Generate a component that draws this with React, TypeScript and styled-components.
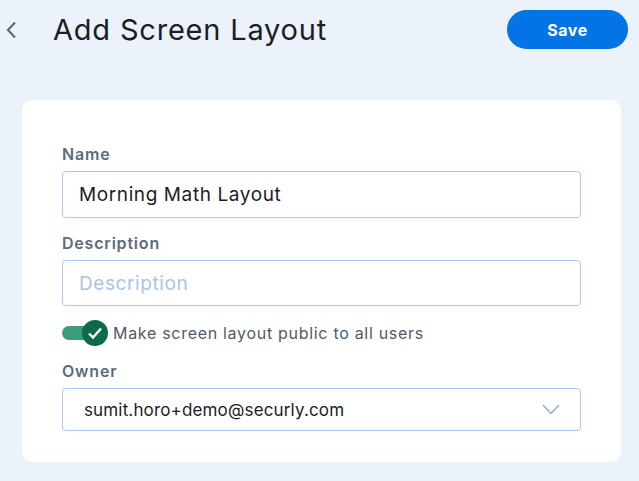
import React from "react";
import styled, { createGlobalStyle } from "styled-components";

const GlobalStyle = createGlobalStyle`
  html, body {
    margin: 0;
    padding: 0;
    background: #ecf2fa;
    font-family: Inter, "Open Sans", sans-serif;
  }
`;

const Page = styled.div`
  width: 639px;
  height: 481px;
  background: #ecf2fa;
  box-sizing: border-box;
  padding: 10px 11px 0 0;
`;

const Header = styled.header`
  display: flex;
  align-items: center;
  height: 39px;
`;

const BackButton = styled.button`
  display: flex;
  align-items: center;
  justify-content: center;
  width: 22px;
  height: 39px;
  padding: 0;
  border: 0;
  background: transparent;
  cursor: pointer;
`;

const Title = styled.h1`
  margin: 0 0 0 31px;
  flex: 1;
  font-size: 29px;
  font-weight: 400;
  color: #1c1d26;
  letter-spacing: 0.8px;
`;

const SaveButton = styled.button`
  width: 121px;
  height: 39px;
  border: 0;
  border-radius: 20px;
  background: #0274e6;
  color: #fff;
  font-family: inherit;
  font-size: 16px;
  font-weight: 700;
  letter-spacing: 0.6px;
`;

const Card = styled.section`
  margin: 51px 7px 0 22px;
  height: 362px;
  box-sizing: border-box;
  background: #fff;
  border-radius: 10px;
  padding: 44px 40px 0;
  display: flex;
  flex-direction: column;
`;

const Label = styled.label`
  display: block;
  font-size: 16px;
  font-weight: 600;
  color: #5e6b7b;
  letter-spacing: 0.8px;
  line-height: 20px;
  margin-bottom: 7px;
`;

const Field = styled.div<{ $gap?: number }>`
  margin-bottom: ${(p) => p.$gap ?? 0}px;
`;

const TextInput = styled.input<{ $h: number }>`
  display: block;
  width: 100%;
  box-sizing: border-box;
  height: ${(p) => p.$h}px;
  border: 1px solid #a9c8eb;
  border-radius: 4px;
  padding: 0 16px;
  font-family: inherit;
  font-size: 19px;
  letter-spacing: 0.6px;
  color: #1c1d26;
  outline: none;
  &::placeholder {
    color: #a9c4e8;
  }
`;

const ToggleRow = styled.div`
  display: flex;
  align-items: center;
  height: 26px;
  margin: 14px 0 15px;
`;

const Track = styled.span`
  position: relative;
  display: inline-block;
  width: 34px;
  height: 14px;
  border-radius: 7px;
  background: #3c9c79;
  margin-right: 17px;
`;

const Knob = styled.span`
  position: absolute;
  top: -6px;
  right: -12px;
  width: 26px;
  height: 26px;
  border-radius: 50%;
  background: #0c6a4d;
  display: flex;
  align-items: center;
  justify-content: center;
`;

const ToggleText = styled.span`
  font-size: 16px;
  letter-spacing: 0.7px;
  color: #4f5a68;
`;

const SelectBox = styled.div`
  display: flex;
  align-items: center;
  justify-content: space-between;
  height: 43px;
  box-sizing: border-box;
  border: 1px solid #a9c8eb;
  border-radius: 4px;
  padding: 0 20px 0 21px;
  font-size: 17px;
  letter-spacing: 0.15px;
  color: #1c1d26;
`;

export default function App() {
  return (
    <>
      <GlobalStyle />
      <Page>
        <Header>
          <BackButton aria-label="Back">
            <svg width="12" height="18" viewBox="0 0 12 18">
              <path d="M10 1.5 L3 9 L10 16.5" fill="none" stroke="#5a6b7d" strokeWidth="2.2" />
            </svg>
          </BackButton>
          <Title>Add Screen Layout</Title>
          <SaveButton>Save</SaveButton>
        </Header>
        <Card>
          <Field $gap={15}>
            <Label>Name</Label>
            <TextInput $h={47} defaultValue="Morning Math Layout" />
          </Field>
          <Field>
            <Label>Description</Label>
            <TextInput $h={46} placeholder="Description" />
          </Field>
          <ToggleRow>
            <Track>
              <Knob>
                <svg width="16" height="14" viewBox="0 0 16 14">
                  <path d="M2 7.5 L6 11.5 L14 2.5" fill="none" stroke="#fff" strokeWidth="2.4" />
                </svg>
              </Knob>
            </Track>
            <ToggleText>Make screen layout public to all users</ToggleText>
          </ToggleRow>
          <Field>
            <Label>Owner</Label>
            <SelectBox>
              <span>sumit.horo+demo@securly.com</span>
              <svg width="18" height="11" viewBox="0 0 18 11">
                <path d="M1 1 L9 9.5 L17 1" fill="none" stroke="#8faad0" strokeWidth="1.4" />
              </svg>
            </SelectBox>
          </Field>
        </Card>
      </Page>
    </>
  );
}
